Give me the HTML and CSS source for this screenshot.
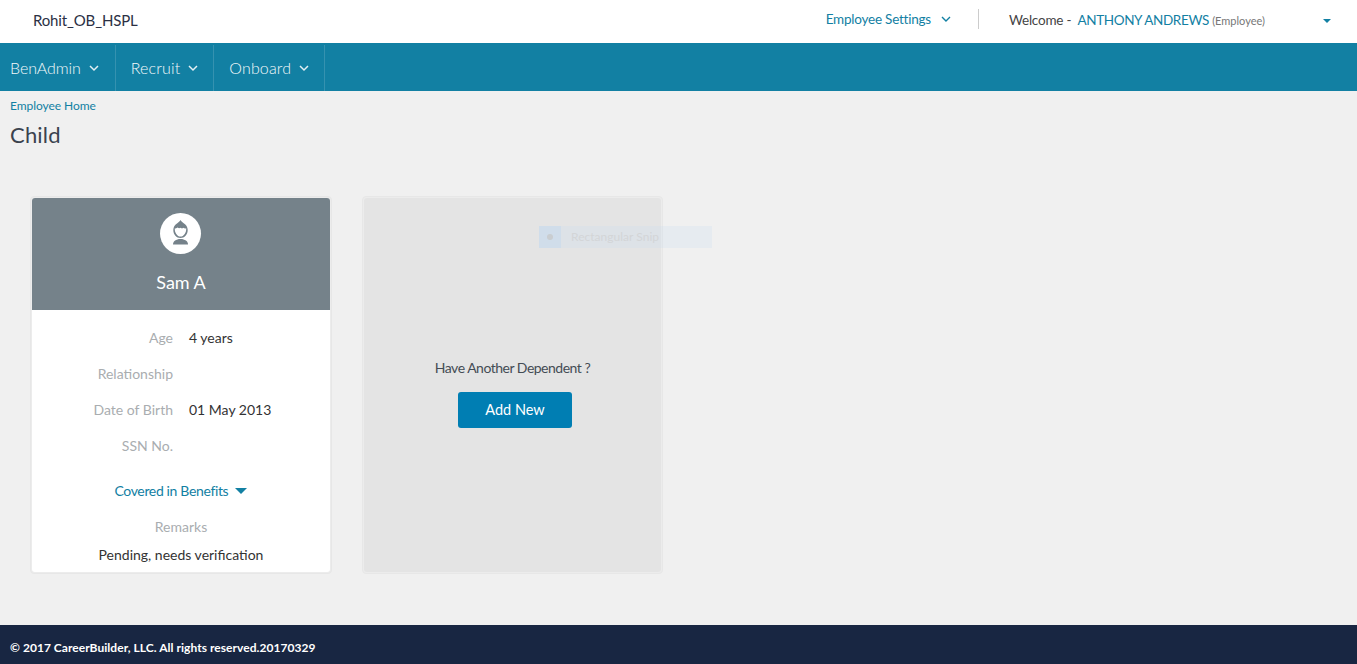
FILE: index.html
```html
<!DOCTYPE html>
<html lang="en">
<head>
<meta charset="utf-8">
<title>Child</title>
<link rel="stylesheet" href="styles.css">
</head>
<body>
<div class="page">
  <header class="topbar">
    <div class="company">Rohit_OB_HSPL</div>
    <div class="top-right">
      <a class="settings">Employee Settings
        <svg class="chev" width="10" height="7" viewBox="0 0 10 7"><path d="M1 1l4 4 4-4" fill="none" stroke="#1280a3" stroke-width="1.4"/></svg>
      </a>
      <span class="top-sep"></span>
      <div class="welcome">Welcome - <a class="user">ANTHONY ANDREWS</a> <span class="role">(Employee)</span></div>
      <span class="caret-small"></span>
    </div>
  </header>
  <nav class="nav">
    <a class="nav-item">BenAdmin <svg class="nav-chev" width="10" height="7" viewBox="0 0 10 7"><path d="M1 1l4 4 4-4" fill="none" stroke="#e4f0f4" stroke-width="1.5"/></svg></a>
    <a class="nav-item">Recruit <svg class="nav-chev" width="10" height="7" viewBox="0 0 10 7"><path d="M1 1l4 4 4-4" fill="none" stroke="#e4f0f4" stroke-width="1.5"/></svg></a>
    <a class="nav-item">Onboard <svg class="nav-chev" width="10" height="7" viewBox="0 0 10 7"><path d="M1 1l4 4 4-4" fill="none" stroke="#e4f0f4" stroke-width="1.5"/></svg></a>
  </nav>
  <main class="main">
    <a class="crumb">Employee Home</a>
    <h1 class="title">Child</h1>
    <div class="cards">
      <section class="card">
        <div class="card-inner person">
          <div class="person-head">
            <span class="avatar">
              <svg width="42" height="42" viewBox="0 0 42 42">
                <circle cx="20.500" cy="20.500" r="20.500" fill="#fff"/>
                <path d="M20.500 7c.8 1.500 2 2.300 3.200 3.200 2.400 1.400 4 3.700 4 6.800 0 4.600-3.200 8-7.200 8s-7.200-3.400-7.200-8c0-3.100 1.600-5.400 4-6.800 1.200-.9 2.400-1.700 3.200-3.200z" fill="#75828a"/>
                <path d="M14.800 15.200c1.200.6 2-.3 2.900-.7.700.8 1.800.9 2.800.3.900.7 2.100.7 2.900 0 .8.600 1.800.9 2.800.4.300 4.500-2.400 8.300-5.700 8.300s-6-3.800-5.700-8.300z" fill="#fff"/>
                <path d="M13 31.500c0-3.200 3-5.500 7.500-5.500s7.500 2.300 7.500 5.500z" fill="#75828a"/>
              </svg>
            </span>
            <div class="person-name">Sam A</div>
          </div>
          <dl class="facts">
            <div class="fact"><dt>Age</dt><dd>4 years</dd></div>
            <div class="fact"><dt>Relationship</dt><dd></dd></div>
            <div class="fact"><dt>Date of Birth</dt><dd>01 May 2013</dd></div>
            <div class="fact"><dt>SSN No.</dt><dd></dd></div>
          </dl>
          <a class="covered">Covered in Benefits <span class="caret-big"></span></a>
          <div class="remarks-label">Remarks</div>
          <div class="remarks">Pending, needs verification</div>
        </div>
      </section>
      <section class="card">
        <div class="card-inner add">
          <p class="add-text">Have Another Dependent ?</p>
          <button class="add-btn" type="button">Add New</button>
        </div>
      </section>
    </div>
    <div class="snip"><span class="snip-icon"><i class="snip-dot"></i></span><span class="snip-text">Rectangular Snip</span></div>
  </main>
  <footer class="footer">© 2017 CareerBuilder, LLC. All rights reserved.20170329</footer>
</div>
</body>
</html>
```

FILE: styles.css
```css
* { box-sizing: border-box; }
html, body { margin: 0; padding: 0; height: 100%; }
body { font-family: Lato, "Open Sans", sans-serif; font-size: 14px; color: #333; background: #f0f0f0; overflow: hidden; }
.page { height: 664px; display: flex; flex-direction: column; }
.topbar { height: 43px; background: #fff; display: flex; align-items: center; justify-content: space-between; padding: 0 26px 2px 33px; }
.company { font-size: 15px; color: #2b3044; letter-spacing: -0.15px; padding-bottom: 2px; }
.top-right { display: flex; align-items: center; }
.settings { color: #1280a3; font-size: 13.5px; letter-spacing: -0.22px; display: flex; align-items: center; padding-bottom: 4px; }
.chev { margin-left: 10px; margin-top: 1px; }
.top-sep { width: 1px; height: 20px; background: #ccc; margin: 0 30px 3px 27px; }
.welcome { font-size: 13.5px; color: #444; width: 314px; letter-spacing: -0.22px; padding-bottom: 2px; }
.user { color: #1280a3; margin-left: 3px; letter-spacing: -0.37px; }
.role { font-size: 11px; color: #777; letter-spacing: 0; }
.caret-small { width: 0; height: 0; border: 4.500px solid transparent; border-top: 4.500px solid #1280a3; border-bottom: 0; }
.nav { height: 48px; background: #1280a3; display: flex; }
.nav-item { display: flex; align-items: center; gap: 8px; padding: 0 15px 2px; color: #f2f8fa; font-size: 16px; font-weight: 300; letter-spacing: 0.15px; border-right: 1px solid #3592b0; margin-top: 2px; height: 46px; }
.nav-item:first-child { padding-left: 10px; padding-right: 16px; letter-spacing: -0.1px; }
.nav-chev { margin-top: 2px; }
.main { position: relative; flex: 1; padding: 8px 10px 0; }
.crumb { display: block; font-size: 12px; line-height: 14px; color: #1280a3; letter-spacing: -0.05px; }
.title { margin: 8px 0 0; font-size: 22px; font-weight: 400; line-height: 28px; color: #3a424e; letter-spacing: 0.2px; }
.cards { display: flex; gap: 30px; margin: 47px 0 0 20px; }
.card { width: 302px; height: 378px; border: 1px solid #e7e7e7; padding: 1px; border-radius: 4px; background: #ececec; }
.card + .card { width: 301px; }
.card-inner { height: 100%; border-radius: 3px; }
.person { background: #fff; text-align: center; font-size: 14px; }
.person-head { height: 112px; background: #75828a; border-radius: 3px 3px 0 0; padding-top: 15px; color: #fff; }
.avatar { display: block; height: 42px; }
.avatar svg { display: block; margin: 0 auto; }
.person-name { margin-top: 15px; font-size: 18px; line-height: 24px; letter-spacing: -0.05px; }
.facts { margin: 10px 0 0; padding: 0; }
.fact { display: flex; height: 36px; line-height: 36px; }
.fact dt { width: 141px; text-align: right; color: #a9adb0; }
.fact dd { margin: 0 0 0 16px; color: #333; }
.covered { display: block; margin-top: 17px; line-height: 20px; color: #1280a3; padding-right: 1px; letter-spacing: -0.35px; }
.caret-big { display: inline-block; width: 0; height: 0; margin-left: 3px; vertical-align: 2px; border: 6px solid transparent; border-top: 6px solid #1280a3; border-bottom: 0; }
.remarks-label { margin-top: 16px; line-height: 20px; color: #a9adb0; }
.remarks { margin-top: 8px; line-height: 20px; color: #333; }
.add { background: #e4e4e4; text-align: center; padding-top: 160px; }
.add-text { margin: 0; font-size: 14px; line-height: 20px; color: #444c55; letter-spacing: -0.5px; }
.add-btn { display: block; width: 114px; height: 36px; margin: 14px 0 0 94px; border: 0; border-radius: 3px; background: #007eb3; color: #fff; font-family: inherit; font-size: 14.500px; padding: 0 0 1px; }
.snip { position: absolute; left: 539px; top: 135px; width: 173px; height: 22px; display: flex; align-items: center; background: rgba(195, 220, 240, .22); }
.snip-icon { width: 22px; height: 22px; background: rgba(190, 215, 240, .4); display: flex; align-items: center; justify-content: center; }
.snip-dot { width: 6px; height: 6px; border-radius: 50%; background: #c9cdd0; }
.snip-text { margin-left: 10px; font-size: 12px; color: #d3d5d7; padding-bottom: 2px; letter-spacing: 0.02px; }
.footer { height: 39px; background: #182642; color: #fff; font-size: 12px; font-weight: 700; line-height: 45px; padding-left: 10px; letter-spacing: 0.04px; }
```
